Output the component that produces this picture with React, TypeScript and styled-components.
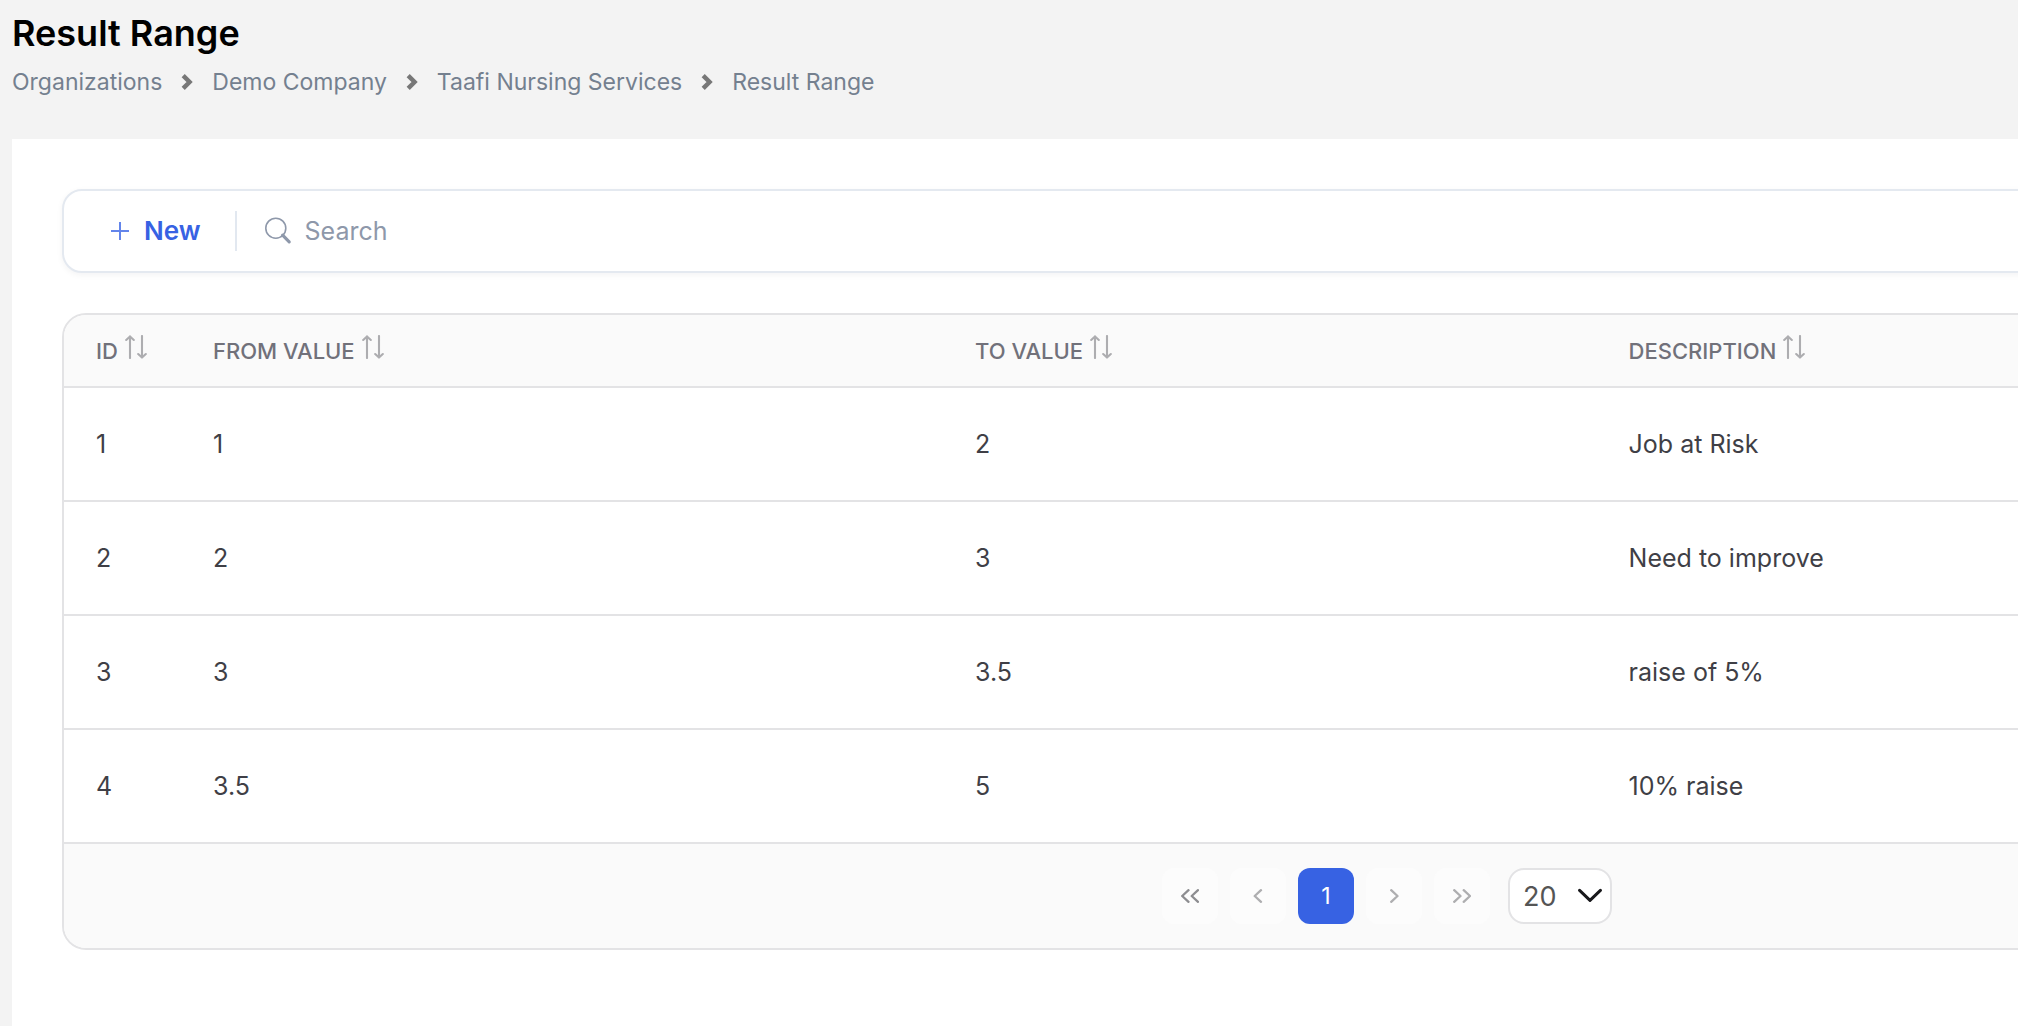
import React, { useMemo, useState } from 'react';
import styled, { createGlobalStyle } from 'styled-components';

const GlobalStyle = createGlobalStyle`
  *, *::before, *::after { box-sizing: border-box; }
  body {
    margin: 0;
    background: #f3f3f3;
    font-family: Inter, "Liberation Sans", sans-serif;
    overflow-x: hidden;
  }
  button, input, select { font-family: inherit; }
`;

const Page = styled.div`
  display: flex;
  flex-direction: column;
  min-height: 100vh;
  padding-left: 12px;
  overflow: hidden;
`;

const PageHeader = styled.header`
  display: flex;
  flex-direction: column;
  gap: 8px;
  padding: 8px 0 41px;
`;

const Title = styled.h1`
  margin: 0;
  font-size: 36px;
  font-weight: 600;
  line-height: 50px;
  color: #000;
`;

const Crumbs = styled.ol`
  display: flex;
  align-items: center;
  gap: 19px;
  margin: 0;
  padding: 0;
  list-style: none;
`;

const Crumb = styled.li`
  display: flex;
  align-items: center;
  gap: 19px;
`;

const CrumbLink = styled.a`
  font-size: 23px;
  line-height: 32px;
  color: #74808f;
  text-decoration: none;
`;

const Panel = styled.main`
  flex: 1;
  padding: 50px 0 50px 50px;
  background: #fff;
`;

/* The grid is wider than the viewport; its right side runs past the edge. */
const WideContent = styled.div`
  display: flex;
  flex-direction: column;
  gap: 40px;
  width: calc(100% + 694px);
`;

const Toolbar = styled.div`
  display: flex;
  align-items: center;
  height: 84px;
  padding: 0 47px;
  border: 2px solid #e4e9f0;
  border-radius: 20px;
  background: #fff;
  box-shadow: 0 2px 6px rgba(15, 23, 42, 0.05);
`;

const NewButton = styled.button`
  display: flex;
  align-items: center;
  gap: 15px;
  padding: 0 34px 0 0;
  border: 0;
  background: none;
  color: #3762e3;
  font-size: 26px;
  font-weight: 600;
  line-height: 40px;
`;

const SearchField = styled.label`
  display: flex;
  flex: 1;
  align-items: center;
  gap: 13px;
  height: 40px;
  padding-left: 27px;
  border-left: 2px solid #e2e8f0;
`;

const SearchInput = styled.input`
  flex: 1;
  padding: 0;
  border: 0;
  outline: 0;
  background: none;
  color: #3f3f46;
  font-size: 25px;
  line-height: 32px;
  &::placeholder { color: #8e98aa; opacity: 1; }
`;

const GridCard = styled.section`
  border: 2px solid #e3e3e5;
  border-radius: 24px;
  background: #fff;
  overflow: hidden;
`;

const Table = styled.table`
  width: 100%;
  border-collapse: separate;
  border-spacing: 0;
  table-layout: fixed;
`;

const Column = styled.col<{ $width?: string }>`
  width: ${(p) => p.$width ?? 'auto'};
`;

const HeadCell = styled.th`
  height: 73px;
  padding: 0 32px 2px;
  border-bottom: 2px solid #e3e3e5;
  background: #fafafa;
  text-align: left;
  vertical-align: middle;
`;

const SortButton = styled.button`
  display: flex;
  align-items: baseline;
  gap: 7px;
  padding: 0;
  border: 0;
  background: none;
  color: #71717a;
  font-size: 22px;
  font-weight: 500;
  line-height: 28px;
  white-space: nowrap;
`;

const Cell = styled.td`
  height: 114px;
  padding: 0 32px;
  border-bottom: 2px solid #e3e3e5;
  color: #3f3f46;
  font-size: 25px;
  line-height: 32px;
`;

const Pager = styled.nav`
  display: flex;
  align-items: center;
  justify-content: center;
  gap: 18px;
  padding: 24px;
  background: #fafafa;
`;

const PageButtons = styled.div`
  display: flex;
  gap: 12px;
`;

const PageButton = styled.button<{ $active?: boolean; $tone?: string }>`
  display: flex;
  align-items: center;
  justify-content: center;
  width: 56px;
  height: 56px;
  padding: 0;
  border: 0;
  border-radius: 12px;
  background: ${(p) => (p.$active ? '#3762e3' : '#fcfcfc')};
  color: ${(p) => (p.$active ? '#fff' : p.$tone ?? '#aeaeb0')};
  font-size: 23px;
  line-height: 32px;
`;

const SelectWrap = styled.div`
  position: relative;
  width: 104px;
  height: 56px;
`;

const SizeSelect = styled.select`
  appearance: none;
  width: 100%;
  height: 100%;
  padding: 0 40px 0 13px;
  border: 2px solid #e3e3e5;
  border-radius: 16px;
  background: #fff;
  color: #555;
  font-size: 27px;
`;

const SelectArrow = styled.svg`
  position: absolute;
  top: 20px;
  right: 10px;
  pointer-events: none;
`;

const line = { fill: 'none', stroke: 'currentColor', strokeLinecap: 'round', strokeLinejoin: 'round' } as const;

const CrumbChevron = () => (
  <svg width="12" height="18" viewBox="0 0 12 18" aria-hidden="true">
    <path d="M2.2 2.6 8.6 9l-6.4 6.4" fill="none" stroke="#777" strokeWidth="4.4" />
  </svg>
);

const PlusIcon = () => (
  <svg width="18" height="18" viewBox="0 0 18 18" aria-hidden="true">
    <path d="M9 0v18M0 9h18" fill="none" stroke="#6385eb" strokeWidth="2" />
  </svg>
);

const SearchIcon = () => (
  <svg width="28" height="28" viewBox="0 0 28 28" color="#8e98aa" aria-hidden="true">
    <circle cx="11.8" cy="11.2" r="10" fill="none" stroke="currentColor" strokeWidth="1.6" />
    <path d="M18.6 18.2 25.2 24.8" {...line} strokeWidth="3.2" />
  </svg>
);

const SortIcon = () => (
  <svg width="22" height="24" viewBox="0 0 22 24" color="#adadb0" aria-hidden="true">
    <path d="M5 23V1.4M1.2 5 5 1.4 8.8 5M17 1v21.6M13.2 19l3.8 3.6 3.8-3.6" {...line} strokeWidth="2.1" />
  </svg>
);

const glyphs = {
  first: 'M7.5 1.2 1.2 7l6.3 5.8M17 1.2 10.7 7l6.3 5.8',
  prev: 'M12 1.2 5.7 7l6.3 5.8',
  next: 'M6.2 1.2 12.5 7l-6.3 5.8',
  last: 'M1.2 1.2 7.5 7l-6.3 5.8M10.7 1.2 17 7l-6.3 5.8',
};

const PagerIcon = ({ kind }: { kind: keyof typeof glyphs }) => (
  <svg width="18" height="14" viewBox="0 0 18 14" aria-hidden="true">
    <path d={glyphs[kind]} {...line} strokeWidth="2.3" />
  </svg>
);

const crumbs = ['Organizations', 'Demo Company', 'Taafi Nursing Services', 'Result Range'];

type Row = { id: string; from: string; to: string; description: string };

const columns: { key: keyof Row; label: string; width?: string }[] = [
  { key: 'id', label: 'ID', width: '117px' },
  { key: 'from', label: 'FROM VALUE', width: '28.8%' },
  { key: 'to', label: 'TO VALUE', width: '24.7%' },
  { key: 'description', label: 'DESCRIPTION' },
];

const data: Row[] = [
  { id: '1', from: '1', to: '2', description: 'Job at Risk' },
  { id: '2', from: '2', to: '3', description: 'Need to improve' },
  { id: '3', from: '3', to: '3.5', description: 'raise of 5%' },
  { id: '4', from: '3.5', to: '5', description: '10% raise' },
];

export default function App() {
  const [query, setQuery] = useState('');
  const [sort, setSort] = useState<{ key: keyof Row; dir: number } | null>(null);

  const rows = useMemo(() => {
    const q = query.toLowerCase();
    const found = data.filter((r) => Object.values(r).some((v) => v.toLowerCase().includes(q)));
    if (sort) {
      found.sort((a, b) => sort.dir * a[sort.key].localeCompare(b[sort.key], undefined, { numeric: true }));
    }
    return found;
  }, [query, sort]);

  const toggleSort = (key: keyof Row) =>
    setSort((s) => ({ key, dir: s && s.key === key ? -s.dir : 1 }));

  return (
    <>
      <GlobalStyle />
      <Page>
        <PageHeader>
          <Title>Result Range</Title>
          <nav aria-label="Breadcrumb">
            <Crumbs>
              {crumbs.map((name, i) => (
                <Crumb key={name}>
                  {i > 0 && <CrumbChevron />}
                  <CrumbLink href="#">{name}</CrumbLink>
                </Crumb>
              ))}
            </Crumbs>
          </nav>
        </PageHeader>
        <Panel>
          <WideContent>
            <Toolbar>
              <NewButton type="button">
                <PlusIcon />
                New
              </NewButton>
              <SearchField>
                <SearchIcon />
                <SearchInput
                  type="text"
                  aria-label="Search"
                  placeholder="Search"
                  value={query}
                  onChange={(e) => setQuery(e.target.value)}
                />
              </SearchField>
            </Toolbar>
            <GridCard>
              <Table>
                <colgroup>
                  {columns.map((c) => (
                    <Column key={c.key} $width={c.width} />
                  ))}
                </colgroup>
                <thead>
                  <tr>
                    {columns.map((c) => (
                      <HeadCell key={c.key} scope="col">
                        <SortButton type="button" onClick={() => toggleSort(c.key)}>
                          {c.label}
                          <SortIcon />
                        </SortButton>
                      </HeadCell>
                    ))}
                  </tr>
                </thead>
                <tbody>
                  {rows.map((r) => (
                    <tr key={r.id}>
                      {columns.map((c) => (
                        <Cell key={c.key}>{r[c.key]}</Cell>
                      ))}
                    </tr>
                  ))}
                </tbody>
              </Table>
              <Pager aria-label="Pages">
                <PageButtons>
                  <PageButton type="button" aria-label="First page" $tone="#8d8d90">
                    <PagerIcon kind="first" />
                  </PageButton>
                  <PageButton type="button" aria-label="Previous page">
                    <PagerIcon kind="prev" />
                  </PageButton>
                  <PageButton type="button" aria-current="page" $active>
                    1
                  </PageButton>
                  <PageButton type="button" aria-label="Next page">
                    <PagerIcon kind="next" />
                  </PageButton>
                  <PageButton type="button" aria-label="Last page">
                    <PagerIcon kind="last" />
                  </PageButton>
                </PageButtons>
                <SelectWrap>
                  <SizeSelect aria-label="Rows per page" defaultValue="20">
                    <option>20</option>
                    <option>50</option>
                  </SizeSelect>
                  <SelectArrow width="24" height="16" viewBox="0 0 24 16" color="#18181b" aria-hidden="true">
                    <path d="M1.6 2.4 12 12.4l10.4-10" {...line} strokeWidth="3" />
                  </SelectArrow>
                </SelectWrap>
              </Pager>
            </GridCard>
          </WideContent>
        </Panel>
      </Page>
    </>
  );
}
